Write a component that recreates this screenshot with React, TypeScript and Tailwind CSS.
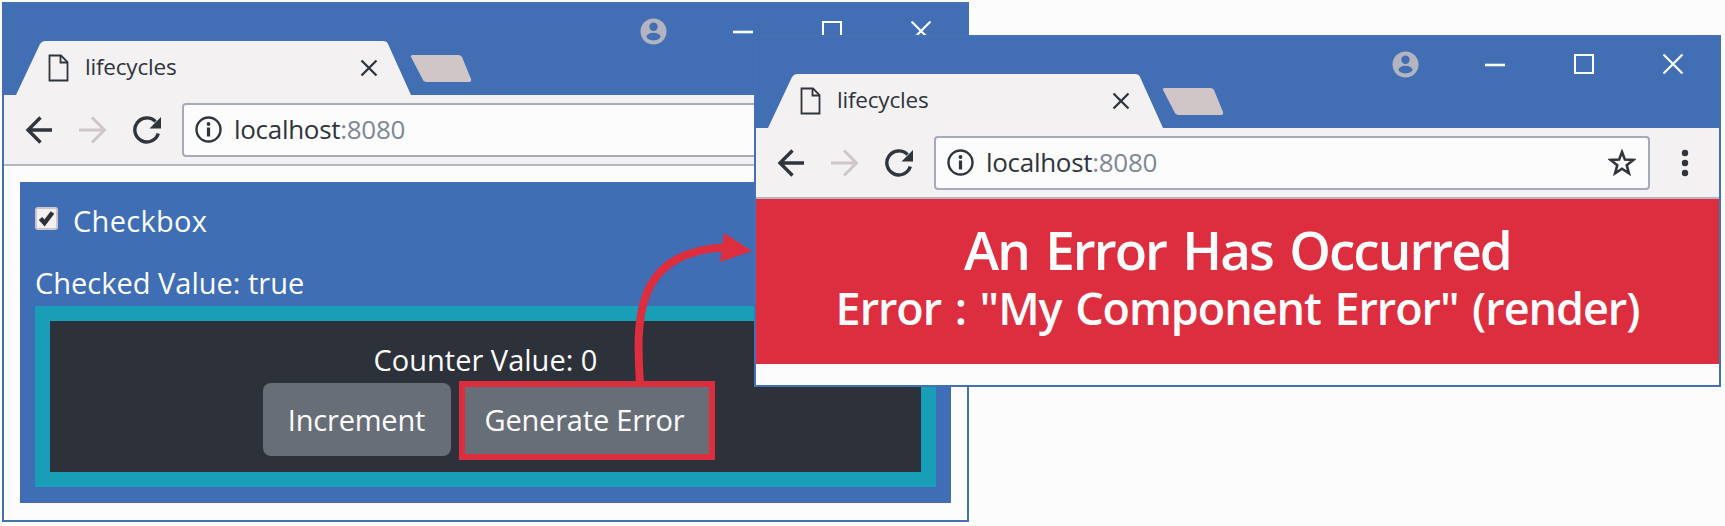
import type { ReactNode } from "react";

function BrowserWindow({ className, children }: { className: string; children: ReactNode }) {
  return (
    <section className={`flex flex-col border-2 border-[#4470b4] bg-[#fcfcfc] ${className}`}>
      <header className="flex h-[91px] shrink-0 bg-[#426fb4]">
        <div className="flex w-[470px] shrink-0 items-end">
          <div className="relative h-[54px] w-[470px]">
            <svg className="absolute inset-0" width="470" height="54" viewBox="0 0 470 54">
              <path d="M0 54H12L36 3Q38 0 41 0H379Q383 0 384 3L407 54Z" fill="#f3f1f1" />
              <path d="M409 14H454Q457 14 458 16L467 38Q468 41 465 41H424Q420 41 419 39L407 16Q406 14 409 14Z" fill="#d0c6c8" />
            </svg>
            <div className="relative flex h-[53px] w-[374px] items-center pl-[44px]">
              <svg width="21" height="28" viewBox="0 0 21 28" fill="none" stroke="#2f343d" strokeWidth="1.8">
                <path d="M1.5 1.5H13L19.500 8V26.500H1.500Z" />
                <path d="M12.500 1.500V8.500H19.500" />
              </svg>
              <span className="ml-[16px] -mt-[2px] grow text-[22.5px] tracking-[-0.2px] text-[#2f343d]">lifecycles</span>
              <svg width="18" height="18" viewBox="0 0 18 18" fill="none" stroke="#2f343d" strokeWidth="2.300">
                <path d="M1.500 1.500L16.500 16.500M16.500 1.500L1.500 16.500" />
              </svg>
            </div>
          </div>
        </div>
        <div className="flex h-[54px] grow items-center justify-end pr-[36px]">
          <svg width="27" height="27" viewBox="0 0 27 27">
            <circle cx="13.500" cy="13.500" r="13" fill="#b3b4bf" />
            <circle cx="13.500" cy="8.700" r="4.200" fill="#426fb4" />
            <ellipse cx="13.500" cy="18.600" rx="7" ry="3.800" fill="#426fb4" />
          </svg>
          <svg className="ml-[66px]" width="20" height="20" viewBox="0 0 20 20">
            <path d="M0 11H20" stroke="#fcfcfc" strokeWidth="2.600" />
          </svg>
          <svg className="ml-[69px]" width="20" height="20" viewBox="0 0 20 20">
            <path d="M1 1H19V19H1Z" fill="none" stroke="#fcfcfc" strokeWidth="2" />
          </svg>
          <svg className="ml-[69px]" width="20" height="20" viewBox="0 0 20 20">
            <path d="M0.500 0.500L19.500 19.500M19.500 0.500L0.500 19.500" stroke="#fcfcfc" strokeWidth="2.200" />
          </svg>
        </div>
      </header>
      <div className="flex h-[71px] shrink-0 items-center border-b-2 border-[#b5b4bf] bg-[#f3f1f1] pl-[21px] pr-[30px]">
        <svg width="28" height="28" viewBox="0 0 28 28" fill="none" stroke="#2f343d" strokeWidth="3.400">
          <path d="M27 14H3M15.500 1.500L3 14L15.500 26.500" />
        </svg>
        <svg className="ml-[26px]" width="28" height="28" viewBox="0 0 28 28" fill="none" stroke="#d0c6c8" strokeWidth="3">
          <path d="M0 14H25M13 1.500L25.500 14L13 26.500" />
        </svg>
        <svg className="ml-[26px]" width="28" height="28" viewBox="0 0 28 28">
          <path d="M25.300 17.500A12 12 0 1 1 22.500 5.600" fill="none" stroke="#2f343d" strokeWidth="3.400" />
          <path d="M28 1V12.500H16.500Z" fill="#2f343d" />
        </svg>
        <div className="ml-[21px] flex h-[54px] w-[716px] items-center rounded-[4px] border-2 border-[#a6aabb] bg-[#fcfcfc] pl-[11px] pr-[12px]">
          <svg width="27" height="27" viewBox="0 0 27 27">
            <circle cx="13.500" cy="13.500" r="12" fill="none" stroke="#2f343d" strokeWidth="2.400" />
            <rect x="11.900" y="11.500" width="3.200" height="9" fill="#2f343d" />
            <circle cx="13.500" cy="8" r="1.900" fill="#2f343d" />
          </svg>
          <span className="ml-[12px] grow text-[26px] tracking-[-0.3px] text-[#2f343d]">
            localhost<span className="text-[#7e8796]">:8080</span>
          </span>
          <svg width="28" height="28" viewBox="0 0 28 28">
            <path d="M14 3L16.900 10.600L25.300 11L18.700 16.200L20.900 24.300L14 19.700L7.100 24.300L9.300 16.200L2.700 11L11.100 10.600Z" fill="none" stroke="#2f343d" strokeWidth="2.600" />
          </svg>
        </div>
        <svg className="ml-auto" width="8" height="28" viewBox="0 0 8 28" fill="#2f343d">
          <circle cx="4" cy="4" r="3.200" />
          <circle cx="4" cy="14" r="3.200" />
          <circle cx="4" cy="24" r="3.200" />
        </svg>
      </div>
      {children}
    </section>
  );
}

export default function App() {
  return (
    <main className="relative h-[526px] w-[1725px] overflow-hidden bg-[#fcfcfc] font-['Open_Sans',sans-serif]">
      <BrowserWindow className="absolute left-[2px] top-[2px] h-[520px] w-[967px]">
        <div className="mx-[16px] mt-[16px] h-[321px] bg-[#3f6eb4] px-[15px] pt-[17px] text-[29px] text-[#fcfcfc]">
          <label className="flex h-[44px] items-center">
            <svg className="-mt-[5px]" width="23" height="23" viewBox="0 0 23 23">
              <rect x="1" y="1" width="21" height="21" rx="2" fill="#f3f0f0" stroke="#cfc5c8" strokeWidth="2" />
              <path d="M5.500 11.500L9.500 16L17.500 5.500" fill="none" stroke="#2d3139" strokeWidth="4.500" />
            </svg>
            <span className="ml-[15px] tracking-[0.3px]">Checkbox</span>
          </label>
          <div className="mt-[16px] h-[47px] leading-[48px]">Checked Value: true</div>
          <div className="flex h-[181px] flex-col items-center border-[15px] border-[#189fb7] bg-[#2d3139] pt-[18px]">
            <div className="h-[42px] leading-[42px]">Counter Value: 0</div>
            <div className="ml-[6px] mt-[2px] flex gap-[8px]">
              <button className="h-[73px] w-[188px] rounded-[8px] bg-[#686e78] tracking-[-0.2px]">Increment</button>
              <button className="-mt-[2px] h-[79px] w-[256px] border-[6px] border-[#dd2e3f] bg-[#686e78] pb-[2px] pr-[4px] tracking-[-0.2px]">Generate Error</button>
            </div>
          </div>
        </div>
      </BrowserWindow>

      <svg className="absolute left-[620px] top-[220px]" width="140" height="170" viewBox="620 220 140 170">
        <path d="M640 384C636 320 634 252 724 247.500" fill="none" stroke="#dd2e3f" strokeWidth="8" />
        <path d="M724 233L752 251L720 262Z" fill="#dd2e3f" />
      </svg>

      <BrowserWindow className="absolute left-[754px] top-[35px] h-[352px] w-[967px]">
        <div className="flex h-[165px] flex-col items-center bg-[#dd2e3f] pt-[19px] font-semibold text-[#fcfcfc]">
          <h1 className="h-[63px] whitespace-nowrap text-[53px] leading-[64px] tracking-[-1.95px] [word-spacing:4.500px]">An Error Has Occurred</h1>
          <h2 className="h-[54px] whitespace-nowrap text-[45px] leading-[54px] tracking-[-1.07px] [word-spacing:3px]">Error : "My Component Error" (render)</h2>
        </div>
      </BrowserWindow>
    </main>
  );
}
